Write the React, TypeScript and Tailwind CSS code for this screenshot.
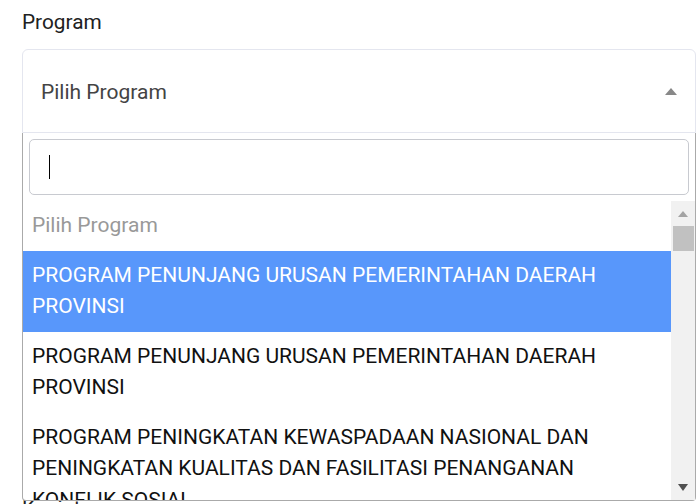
import React from "react"

const options = [
  "PROGRAM PENUNJANG URUSAN PEMERINTAHAN DAERAH PROVINSI",
  "PROGRAM PENUNJANG URUSAN PEMERINTAHAN DAERAH PROVINSI",
  "PROGRAM PENINGKATAN KEWASPADAAN NASIONAL DAN PENINGKATAN KUALITAS DAN FASILITASI PENANGANAN KONFLIK SOSIAL",
  "PROGRAM PEMBERDAYAAN DAN PENGAWASAN ORGANISASI KEMASYARAKATAN",
]

function ProgramSelect() {
  return (
    <div className="relative w-[674px]">
      {/* Selected value */}
      <div className="flex h-[84px] items-center justify-between rounded-t-[6px] border border-[#e4e6ef] pl-[18px] pr-[18px] pt-[3px]">
        <span className="text-[21px] leading-[31px] text-[#444]">Pilih Program</span>
        <span className="-mt-[3px] h-0 w-0 border-x-[6px] border-b-[7px] border-x-transparent border-b-[#888]" />
      </div>

      {/* Open dropdown */}
      <div className="absolute left-0 top-full z-10 w-full rounded-b-[4px] border-x border-b border-[#aaa] bg-white">
        <div className="p-[6px]">
          <div className="flex h-[56px] items-center rounded-[5px] border border-[#c8cad0] pl-[19px]">
            <span className="h-[24px] w-px bg-black" />
          </div>
        </div>

        <div className="flex h-[299px]">
          <ul className="flex-1 overflow-hidden">
            <li className="py-[9.3px] pl-[9px] pr-[12px] text-[21px] leading-[31.2px] text-[#999]">Pilih Program</li>
            {options.map((o, i) => (
              <li
                key={i}
                className={
                  i === 0
                    ? "bg-[#5897fb] py-[9.3px] pl-[9px] pr-[12px] text-[21px] leading-[31.2px] text-white"
                    : "py-[9.3px] pl-[9px] pr-[12px] text-[21px] leading-[31.2px] text-[#111]"
                }
              >
                {o}
              </li>
            ))}
          </ul>

          {/* Scrollbar */}
          <div className="flex w-[24px] flex-col bg-[#f1f1f1]">
            <div className="flex h-[25px] items-center justify-center">
              <span className="h-0 w-0 border-x-[5.5px] border-b-[6px] border-x-transparent border-b-[#a3a3a3]" />
            </div>
            <div className="ml-[2px] mr-[1px] h-[25px] bg-[#c1c1c1]" />
            <div className="flex-1" />
            <div className="flex h-[25px] items-center justify-center">
              <span className="h-0 w-0 border-x-[5.5px] border-t-[7px] border-x-transparent border-t-[#505050]" />
            </div>
          </div>
        </div>
      </div>
    </div>
  )
}

export default function App() {
  return (
    <div className="min-h-screen bg-white px-[22px] pt-[7px] font-['Roboto',sans-serif]">
      <label className="mb-[11px] block text-[20.8px] leading-[31px] text-[#212121]">Program</label>
      <ProgramSelect />
      <label className="mt-[360px] block text-[20.8px] leading-[31px] text-[#212121]">Kegiatan</label>
    </div>
  )
}
